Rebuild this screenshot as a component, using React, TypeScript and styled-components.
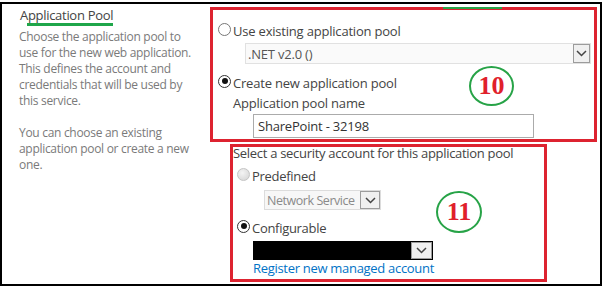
import React from "react";
import styled, { createGlobalStyle } from "styled-components";

const Global = createGlobalStyle`
  html, body { margin: 0; padding: 0; background: #fff; }
  body { font-family: "Open Sans", "Noto Sans", sans-serif; }
  * { box-sizing: border-box; }
`;

const Frame = styled.div`
  margin-top: 2px;
  width: 602px;
  height: 284px;
  border: 2px solid #000;
  display: flex;
  overflow: hidden;
  background: #fff;
`;

const InfoColumn = styled.div`
  width: 208px;
  flex: none;
  padding: 3px 0 0 17px;
`;

const Title = styled.div`
  margin-left: 1px;
  font-size: 13px;
  line-height: 16px;
  letter-spacing: -0.3px;
  color: #444;
`;

const TitleUnderline = styled.div`
  margin-left: 8px;
  width: 86px;
  height: 3px;
  background: #1fa64a;
`;

const Description = styled.p`
  margin: 3px 0 0 0;
  font-size: 12px;
  line-height: 16px;
  letter-spacing: -0.3px;
  color: #7a7a7a;
  & + & {
    margin-top: 16px;
  }
`;

const FormColumn = styled.div`
  flex: 1;
  display: flex;
  flex-direction: column;
`;

const RedBox = styled.div<{ $top: number; $left: number; $w: number; $h: number; $ls: number }>`
  position: relative;
  margin-top: ${(p) => p.$top}px;
  margin-left: ${(p) => p.$left}px;
  width: ${(p) => p.$w}px;
  height: ${(p) => p.$h}px;
  border: 3px solid #dd2330;
  display: flex;
  flex-direction: column;
  align-items: flex-start;
  color: #444;
  font-size: 13px;
  letter-spacing: ${(p) => p.$ls}px;
`;

const RadioRow = styled.label<{ $top: number; $left: number }>`
  display: flex;
  align-items: center;
  height: 18px;
  line-height: 18px;
  margin-top: ${(p) => p.$top}px;
  margin-left: ${(p) => p.$left}px;
  gap: 2px;
  white-space: nowrap;
`;

const RadioDot = styled.span<{ $checked?: boolean; $disabled?: boolean }>`
  position: relative;
  width: 13px;
  height: 13px;
  border-radius: 50%;
  flex: none;
  margin-top: -4px;
  border: 1px solid ${(p) => (p.$disabled ? "#c4c4c4" : p.$checked ? "#333" : "#777")};
  background: ${(p) =>
    p.$disabled ? "radial-gradient(circle at 40% 35%, #f4f4f4, #d2d2d2)" : "#fff"};
  &::after {
    content: "";
    display: ${(p) => (p.$checked ? "block" : "none")};
    position: absolute;
    left: 2.5px;
    top: 2.5px;
    width: 6px;
    height: 6px;
    border-radius: 50%;
    background: #111;
  }
`;

const FieldLabel = styled.div<{ $top: number; $left: number; $lh: number }>`
  margin-top: ${(p) => p.$top}px;
  margin-left: ${(p) => p.$left}px;
  line-height: ${(p) => p.$lh}px;
  white-space: nowrap;
`;

const SelectBox = styled.div<{
  $top: number;
  $left: number;
  $w: number;
  $h: number;
  $bg: string;
  $border: string;
  $color: string;
}>`
  display: flex;
  align-items: stretch;
  margin-top: ${(p) => p.$top}px;
  margin-left: ${(p) => p.$left}px;
  width: ${(p) => p.$w}px;
  height: ${(p) => p.$h}px;
  background: ${(p) => p.$bg};
  border: 1px solid ${(p) => p.$border};
  color: ${(p) => p.$color};
`;

const SelectValue = styled.span<{ $compact?: boolean }>`
  flex: 1;
  padding-left: ${(p) => (p.$compact ? 2 : 2)}px;
  font-size: ${(p) => (p.$compact ? 12.5 : 13)}px;
  letter-spacing: ${(p) => (p.$compact ? -0.45 : -0.2)}px;
  display: flex;
  align-items: center;
  white-space: nowrap;
  overflow: hidden;
`;

const ArrowBox = styled.span<{ $w: number }>`
  width: ${(p) => p.$w}px;
  flex: none;
  border: 1px solid #9c9c9c;
  background: #f0f0f0;
  display: flex;
  align-items: center;
  justify-content: center;
`;

const TextInput = styled.div`
  margin-top: 2px;
  margin-left: 40px;
  width: 281px;
  height: 24px;
  border: 1px solid #ababab;
  padding-left: 4px;
  display: flex;
  align-items: center;
  color: #333;
`;

const Link = styled.a`
  margin-top: 1px;
  margin-left: 20px;
  line-height: 14px;
  color: #0072c6;
  text-decoration: none;
  white-space: nowrap;
`;

const Badge = styled.div<{ $x: number; $y: number; $w: number; $h: number }>`
  position: absolute;
  left: ${(p) => p.$x}px;
  top: ${(p) => p.$y}px;
  width: ${(p) => p.$w}px;
  height: ${(p) => p.$h}px;
  border: 2.5px solid #27a347;
  border-radius: 50%;
  display: flex;
  align-items: center;
  justify-content: center;
  font-family: "Liberation Serif", "DejaVu Serif", serif;
  font-weight: bold;
  font-size: 26px;
  letter-spacing: 0;
  color: #e0202b;
`;

const GreenMark = styled.div`
  position: absolute;
  left: 230px;
  top: -3px;
  width: 59px;
  height: 2px;
  background: #27a347;
`;

const Chevron = () => (
  <svg width="11" height="7" viewBox="0 0 11 7">
    <path d="M1 1 L5.5 5.5 L10 1" fill="none" stroke="#444" strokeWidth="1.5" />
  </svg>
);

export default function App() {
  return (
    <>
      <Global />
      <Frame>
        <InfoColumn>
          <Title>Application Pool</Title>
          <TitleUnderline />
          <Description>
            Choose the application pool to
            <br />
            use for the new web application.
            <br />
            This defines the account and
            <br />
            credentials that will be used by
            <br />
            this service.
          </Description>
          <Description>
            You can choose an existing
            <br />
            application pool or create a new
            <br />
            one.
          </Description>
        </InfoColumn>
        <FormColumn>
          <RedBox $top={3} $left={0} $w={387} $h={135} $ls={-0.2}>
            <GreenMark />
            <RadioRow $top={12} $left={5}>
              <RadioDot />
              Use existing application pool
            </RadioRow>
            <SelectBox
              $top={3}
              $left={32}
              $w={346}
              $h={21}
              $bg="#fafafa"
              $border="#e1e1e1"
              $color="#555"
            >
              <SelectValue>.NET v2.0 ()</SelectValue>
              <ArrowBox $w={17}>
                <Chevron />
              </ArrowBox>
            </SelectBox>
            <RadioRow $top={10} $left={5}>
              <RadioDot $checked />
              Create new application pool
            </RadioRow>
            <FieldLabel $top={2} $left={20} $lh={18}>
              Application pool name
            </FieldLabel>
            <TextInput>SharePoint - 32198</TextInput>
            <Badge $x={256} $y={56} $w={45} $h={40}>
              10
            </Badge>
          </RedBox>
          <RedBox $top={2} $left={20} $w={317} $h={138} $ls={-0.3}>
            <FieldLabel $top={-1} $left={0} $lh={14}>
              Select a security account for this application pool
            </FieldLabel>
            <RadioRow $top={7} $left={4}>
              <RadioDot $disabled />
              Predefined
            </RadioRow>
            <SelectBox
              $top={5}
              $left={31}
              $w={117}
              $h={20}
              $bg="#f7f7f7"
              $border="#dcdcdc"
              $color="#8a8a8a"
            >
              <SelectValue $compact>Network Service</SelectValue>
              <ArrowBox $w={20}>
                <Chevron />
              </ArrowBox>
            </SelectBox>
            <RadioRow $top={9} $left={4}>
              <RadioDot $checked />
              Configurable
            </RadioRow>
            <SelectBox
              $top={4}
              $left={20}
              $w={180}
              $h={19}
              $bg="#000"
              $border="#000"
              $color="#000"
            >
              <SelectValue />
              <ArrowBox $w={21}>
                <Chevron />
              </ArrowBox>
            </SelectBox>
            <Link href="#">Register new managed account</Link>
            <Badge $x={203} $y={44} $w={46} $h={42}>
              11
            </Badge>
          </RedBox>
        </FormColumn>
      </Frame>
    </>
  );
}
